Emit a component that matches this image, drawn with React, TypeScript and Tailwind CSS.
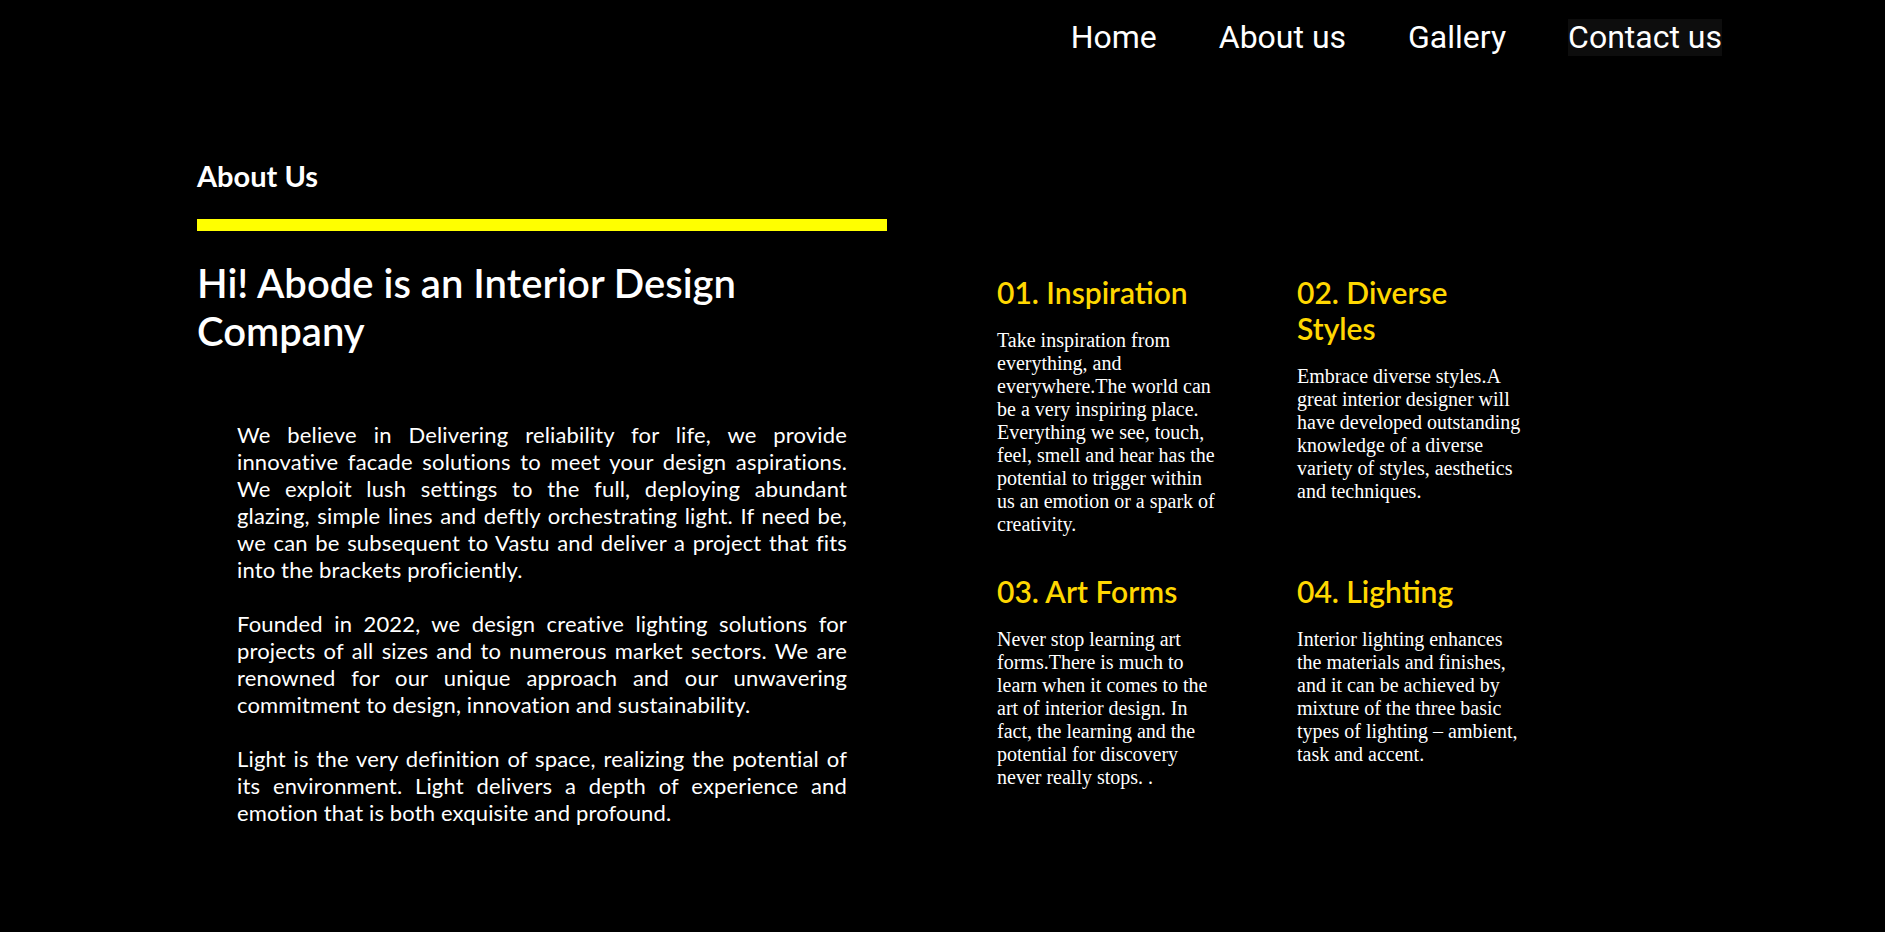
import * as React from "react"

const navLinks = ["Home", "About us", "Gallery", "Contact us"]

const features = [
    {
        title: "01. Inspiration",
        text: "Take inspiration from everything, and everywhere.The world can be a very inspiring place. Everything we see, touch, feel, smell and hear has the potential to trigger within us an emotion or a spark of creativity.",
    },
    {
        title: "02. Diverse Styles",
        text: "Embrace diverse styles.A great interior designer will have developed outstanding knowledge of a diverse variety of styles, aesthetics and techniques.",
    },
    {
        title: "03. Art Forms",
        text: "Never stop learning art forms.There is much to learn when it comes to the art of interior design. In fact, the learning and the potential for discovery never really stops. .",
    },
    {
        title: "04. Lighting",
        text: "Interior lighting enhances the materials and finishes, and it can be achieved by mixture of the three basic types of lighting – ambient, task and accent.",
    },
]

export default function App() {
    return (
        <div className="min-h-[932px] w-full bg-black text-white">
            {/* top navigation */}
            <nav className="flex justify-end gap-[62px] pr-[163px] pt-[19px] font-['Roboto',sans-serif] text-[32px] leading-[37px]">
                {navLinks.map((link) => (
                    <a
                        key={link}
                        href="#"
                        className={link === "Contact us" ? "bg-[#0d0d0d]" : ""}
                    >
                        {link}
                    </a>
                ))}
            </nav>

            <main className="mt-[102px] flex pl-[197px] font-['Lato',sans-serif]">
                <section className="w-[690px]">
                    <h2 className="text-[29px] font-bold leading-[36px]">About Us</h2>
                    <div className="mt-[25px] h-[12px] w-full bg-[#ffff00]" />
                    <h1 className="mt-[28px] text-[40px] font-semibold leading-[48px]">
                        Hi! Abode is an Interior Design Company
                    </h1>
                    <div className="mt-[66px] space-y-[27px] px-10 text-justify text-[22px] leading-[27px] tracking-[0.15px]">
                        <p>
                            We believe in Delivering reliability for life, we provide innovative facade
                            solutions to meet your design aspirations. We exploit lush settings to the
                            full, deploying abundant glazing, simple lines and deftly orchestrating
                            light. If need be, we can be subsequent to Vastu and deliver a project that
                            fits into the brackets proficiently.
                        </p>
                        <p>
                            Founded in 2022, we design creative lighting solutions for projects of all
                            sizes and to numerous market sectors. We are renowned for our unique
                            approach and our unwavering commitment to design, innovation and
                            sustainability.
                        </p>
                        <p>
                            Light is the very definition of space, realizing the potential of its
                            environment. Light delivers a depth of experience and emotion that is both
                            exquisite and profound.
                        </p>
                    </div>
                </section>

                <section className="ml-[110px] grid grid-cols-[225px_225px] gap-x-[75px] gap-y-[37px] self-start pt-[116px]">
                    {features.map((f) => (
                        <div key={f.title}>
                            <h3 className="text-[30px] font-semibold leading-[36px] text-[#ffd700]">
                                {f.title}
                            </h3>
                            <p className="mt-[19px] font-['Liberation_Serif',serif] text-[20px] leading-[23px]">
                                {f.text}
                            </p>
                        </div>
                    ))}
                </section>
            </main>
        </div>
    )
}
